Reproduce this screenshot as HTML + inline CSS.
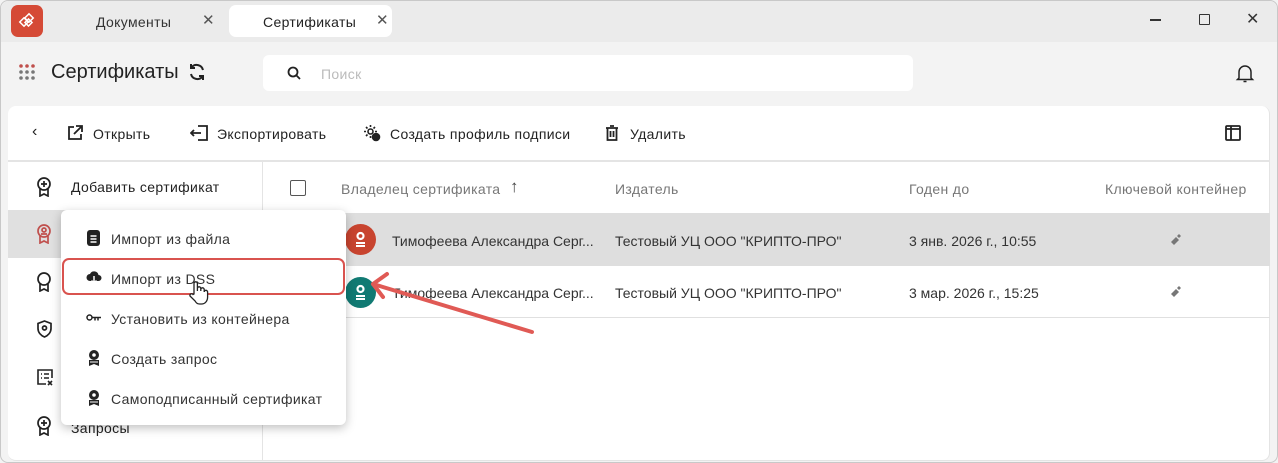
<!DOCTYPE html>
<html><head><meta charset="utf-8">
<style>
*{box-sizing:border-box;margin:0;padding:0}
body{width:1278px;height:463px;overflow:hidden;background:#f3f3f3;font-family:"Liberation Sans","Noto Sans CJK SC",sans-serif;color:#222;position:relative}
.a{position:absolute;white-space:nowrap}
.t14{font-size:14px;letter-spacing:0.35px}
.r{letter-spacing:0}
svg{position:absolute}
</style></head><body>
<div class="a" style="left:0;top:0;width:1278px;height:463px;border:1px solid #c8c8c8;border-radius:8px"></div>
<div class="a" style="left:1px;top:1px;width:1276px;height:41px;background:#ebebeb;border-radius:8px 8px 0 0"></div>
<div class="a" style="left:11px;top:5px;width:32px;height:32px;background:#d54a36;border-radius:7px"></div>
<svg style="left:17px;top:11px" width="20" height="20" viewBox="0 0 20 20"><g fill="none" stroke="#fff" stroke-width="1.5"><rect x="4" y="8" width="6" height="6" transform="rotate(45 7 11)"/><rect x="9" y="4" width="6" height="6" transform="rotate(45 12 7)"/><rect x="9" y="9" width="5" height="5" transform="rotate(45 11.5 11.5)"/></g></svg>
<div class="a t14" style="left:96px;top:14px;color:#333">Документы</div>
<div class="a" style="left:202px;top:11px;font-size:15px;color:#555">✕</div>
<div class="a" style="left:229px;top:5px;width:163px;height:32px;background:#fff;border-radius:7px"></div>
<div class="a t14" style="left:263px;top:14px;color:#222">Сертификаты</div>
<div class="a" style="left:376px;top:11px;font-size:15px;color:#555">✕</div>
<div class="a" style="left:1150px;top:19px;width:11px;height:1.5px;background:#333"></div>
<div class="a" style="left:1199px;top:14px;width:11px;height:11px;border:1.3px solid #333;border-radius:1px"></div>
<div class="a" style="left:1246px;top:9px;font-size:16px;color:#333">✕</div>
<svg style="left:19px;top:64px" width="18" height="18"><g fill="#777"><circle cx="2" cy="2" r="1.8" fill="#c0504d"/><circle cx="8" cy="2" r="1.8" fill="#c0504d"/><circle cx="14" cy="2" r="1.8" fill="#c0504d"/><circle cx="2" cy="8" r="1.8"/><circle cx="8" cy="8" r="1.8"/><circle cx="14" cy="8" r="1.8"/><circle cx="2" cy="14" r="1.8"/><circle cx="8" cy="14" r="1.8"/><circle cx="14" cy="14" r="1.8"/></g></svg>
<div class="a" style="left:51px;top:61px;font-size:20px;color:#222">Сертификаты</div>
<svg style="left:187px;top:62px" width="20" height="20" viewBox="0 0 20 20" fill="none" stroke="#222" stroke-width="2"><path d="M16 8a6.5 6.5 0 0 0-11.5-2.5M4 12a6.5 6.5 0 0 0 11.5 2.5"/><path d="M4 2v4h4M16 18v-4h-4"/></svg>
<div class="a" style="left:263px;top:55px;width:650px;height:36px;background:#fff;border-radius:6px"></div>
<svg style="left:287px;top:66px" width="14" height="14" fill="none" stroke="#222" stroke-width="1.8"><circle cx="6" cy="6" r="4.5"/><path d="M9.5 9.5L13 13"/></svg>
<div class="a t14" style="left:321px;top:66px;color:#bbb">Поиск</div>
<svg style="left:1235px;top:63px" width="20" height="20" fill="none" stroke="#222" stroke-width="1.5"><path d="M4 15V9a6 6 0 0 1 12 0v6l1.5 1.5h-15z"/><path d="M8.5 18.5h3"/></svg>
<div class="a" style="left:8px;top:106px;width:1262px;height:355px;background:#fff;border-radius:8px;border-right:1px solid #e4e4e4;border-bottom:1px solid #e4e4e4"></div>
<div class="a" style="left:8px;top:160px;width:1262px;height:2px;background:#e4e4e4"></div>
<div class="a" style="left:262px;top:162px;width:1px;height:299px;background:#e4e4e4"></div>
<div class="a" style="left:32px;top:123px;font-size:16px;color:#222">‹</div>
<svg style="left:67px;top:125px" width="16" height="16" fill="none" stroke="#222" stroke-width="1.8"><path d="M7 2H2v12h12V9M9 1h6v6M15 1L7 9"/></svg>
<div class="a t14" style="left:93px;top:126px">Открыть</div>
<svg style="left:190px;top:125px" width="18" height="16" fill="none" stroke="#222" stroke-width="1.8"><path d="M8 1h9v14H8M1 8h10M4 5L1 8l3 3"/></svg>
<div class="a t14" style="left:217px;top:126px">Экспортировать</div>
<svg style="left:363px;top:124px" width="18" height="18" fill="none" stroke="#222" stroke-width="1.6"><circle cx="7.5" cy="7.5" r="2.5"/><path d="M7.5 1v2M7.5 12v2M1 7.5h2M12 7.5h2M3 3l1.5 1.5M10.5 10.5L12 12M3 12l1.5-1.5M12 3l-1.5 1.5"/><circle cx="13" cy="13" r="3.5" fill="#222"/></svg>
<div class="a t14" style="left:390px;top:126px">Создать профиль подписи</div>
<svg style="left:605px;top:125px" width="14" height="16" fill="none" stroke="#222" stroke-width="1.8"><path d="M1 3h12M5 1h4M2.5 3v12h9V3M5.5 6v6M8.5 6v6"/></svg>
<div class="a t14" style="left:630px;top:126px">Удалить</div>
<svg style="left:1225px;top:125px" width="16" height="16" fill="none" stroke="#222" stroke-width="1.8"><rect x="1" y="1" width="14" height="14" rx="1"/><path d="M6 1v14M1 4h14"/></svg>
<svg style="left:36px;top:177px" width="16" height="20" fill="none" stroke="#222" stroke-width="1.7"><circle cx="8" cy="7" r="6"/><path d="M8 4v6M5 7h6M4 12v7l4-2 4 2v-7"/></svg>
<div class="a t14" style="left:71px;top:179px">Добавить сертификат</div>
<div class="a" style="left:8px;top:210px;width:254px;height:48px;background:#e0e0e0"></div>
<svg style="left:36px;top:224px" width="16" height="20" fill="none" stroke="#c0504d" stroke-width="1.7"><circle cx="8" cy="7" r="6"/><circle cx="8" cy="6" r="2"/><path d="M5 10h6M4 12v7l4-2 4 2v-7"/></svg>
<svg style="left:36px;top:272px" width="16" height="20" fill="none" stroke="#222" stroke-width="1.7"><circle cx="8" cy="7" r="6"/><path d="M4 12v7l4-2 4 2v-7"/></svg>
<svg style="left:37px;top:320px" width="15" height="18" fill="none" stroke="#222" stroke-width="1.7"><path d="M7.5 1L14 3.5v5c0 4-3 7-6.5 8.5C4 15.5 1 12.5 1 8.5v-5z"/><circle cx="7.5" cy="8" r="2"/></svg>
<svg style="left:37px;top:369px" width="17" height="17" fill="none" stroke="#222" stroke-width="1.6"><path d="M9 15H1V1h14v8M4 5h1M7 5h5M4 9h1M7 9h5M11 12l4 4M15 12l-4 4"/></svg>
<svg style="left:36px;top:416px" width="16" height="20" fill="none" stroke="#222" stroke-width="1.7"><circle cx="8" cy="7" r="6"/><path d="M8 4v6M5 7h6M4 12v7l4-2 4 2v-7"/></svg>
<div class="a t14" style="left:71px;top:420px">Запросы</div>
<div class="a" style="left:290px;top:180px;width:16px;height:16px;border:1.3px solid #555;border-radius:2px"></div>
<div class="a t14" style="left:341px;top:181px;color:#777">Владелец сертификата</div>
<div class="a" style="left:510px;top:177px;font-size:17px;color:#444">↑</div>
<div class="a t14" style="left:615px;top:181px;color:#777">Издатель</div>
<div class="a t14" style="left:909px;top:181px;color:#777">Годен до</div>
<div class="a t14" style="left:1105px;top:181px;color:#777">Ключевой контейнер</div>
<div class="a" style="left:263px;top:213px;width:1007px;height:53px;background:#dedede"></div>
<div class="a" style="left:263px;top:317px;width:1007px;height:1px;background:#e0e0e0"></div>
<div class="a" style="left:345px;top:224px;width:31px;height:31px;border-radius:50%;background:#c8442f"></div>
<div class="a" style="left:345px;top:277px;width:31px;height:31px;border-radius:50%;background:#117a73"></div>
<svg style="left:354px;top:231px" width="13" height="17" fill="none" stroke="#fff" stroke-width="2.2"><circle cx="6.5" cy="5" r="3"/><path d="M2 12h9M2 15h9" stroke-width="2"/></svg>
<svg style="left:354px;top:284px" width="13" height="17" fill="none" stroke="#fff" stroke-width="2.2"><circle cx="6.5" cy="5" r="3"/><path d="M2 12h9M2 15h9" stroke-width="2"/></svg>
<div class="a t14 r" style="left:392px;top:233px;color:#333">Тимофеева Александра Серг...</div>
<div class="a t14 r" style="left:392px;top:285px;color:#333">Тимофеева Александра Серг...</div>
<div class="a t14 r" style="left:615px;top:233px;color:#333">Тестовый УЦ ООО "КРИПТО-ПРО"</div>
<div class="a t14 r" style="left:615px;top:285px;color:#333">Тестовый УЦ ООО "КРИПТО-ПРО"</div>
<div class="a t14 r" style="left:909px;top:233px;color:#333">3 янв. 2026 г., 10:55</div>
<div class="a t14 r" style="left:909px;top:285px;color:#333">3 мар. 2026 г., 15:25</div>
<svg style="left:1169px;top:233px" width="12" height="12"><path d="M2 9l5-5 3 3-5 5z" fill="#777"/><path d="M8 3l2-2 2 2-2 2z" fill="#777"/></svg>
<svg style="left:1169px;top:285px" width="12" height="12"><path d="M2 9l5-5 3 3-5 5z" fill="#777"/><path d="M8 3l2-2 2 2-2 2z" fill="#777"/></svg>
<div class="a" style="left:61px;top:210px;width:285px;height:215px;background:#fff;border-radius:6px;box-shadow:0 3px 10px rgba(0,0,0,.25)"></div>
<svg style="left:87px;top:230px" width="13" height="16"><rect x="0" y="0" width="13" height="16" rx="3" fill="#222"/><path d="M3.5 6h6M3.5 9h6M3.5 12h6" stroke="#fff" stroke-width="1.4"/></svg>
<div class="a t14" style="left:111px;top:231px;color:#333">Импорт из файла</div>
<div class="a" style="left:62px;top:258px;width:283px;height:37px;border:2.5px solid #d9534f;border-radius:7px"></div>
<svg style="left:86px;top:270px" width="16" height="14"><path d="M4 11a3.5 3.5 0 0 1 0-7 4.5 4.5 0 0 1 8.5 1A3 3 0 0 1 12.5 11z" fill="#222"/><path d="M8 6v7M5.5 10.5L8 13l2.5-2.5" stroke="#fff" stroke-width="1.5" fill="none"/></svg>
<div class="a t14" style="left:111px;top:271px;color:#333">Импорт из DSS</div>
<svg style="left:187px;top:280px" width="22" height="26"><path d="M7 14V3.5a1.7 1.7 0 0 1 3.4 0V11V8.5a1.7 1.7 0 0 1 3.4 0V11v-1.5a1.7 1.7 0 0 1 3.4 0V12a1.7 1.7 0 0 1 3.4 0v5c0 4-2.5 7-6 7h-2c-2 0-3.5-1-4.5-3L3 16a1.7 1.7 0 0 1 3-1.5z" fill="#fff" stroke="#222" stroke-width="1.3"/></svg>
<svg style="left:86px;top:314px" width="16" height="8" fill="none" stroke="#222" stroke-width="1.5"><circle cx="3.5" cy="3.5" r="2.5"/><path d="M6 3.5h9M9 3.5v3M12 3.5v3"/></svg>
<div class="a t14" style="left:111px;top:311px;color:#333">Установить из контейнера</div>
<svg style="left:88px;top:350px" width="12" height="16"><circle cx="6" cy="5" r="5" fill="#222"/><circle cx="6" cy="5" r="1.8" fill="#fff"/><path d="M1 10h10v6l-5-2-5 2z" fill="#222"/><path d="M2 12h8" stroke="#fff"/></svg>
<div class="a t14" style="left:111px;top:351px;color:#333">Создать запрос</div>
<svg style="left:88px;top:390px" width="12" height="16"><circle cx="6" cy="5" r="5" fill="#222"/><circle cx="6" cy="5" r="1.8" fill="#fff"/><path d="M1 10h10v6l-5-2-5 2z" fill="#222"/><path d="M2 12h8" stroke="#fff"/></svg>
<div class="a t14" style="left:111px;top:391px;color:#333">Самоподписанный сертификат</div>
<svg style="left:365px;top:270px" width="175" height="70"><g stroke="#e05a55" stroke-width="4" stroke-linecap="round" fill="none"><path d="M167 62L8 14"/><path d="M8 14L22 4M8 14L18 27"/></g></svg>
</body></html>
